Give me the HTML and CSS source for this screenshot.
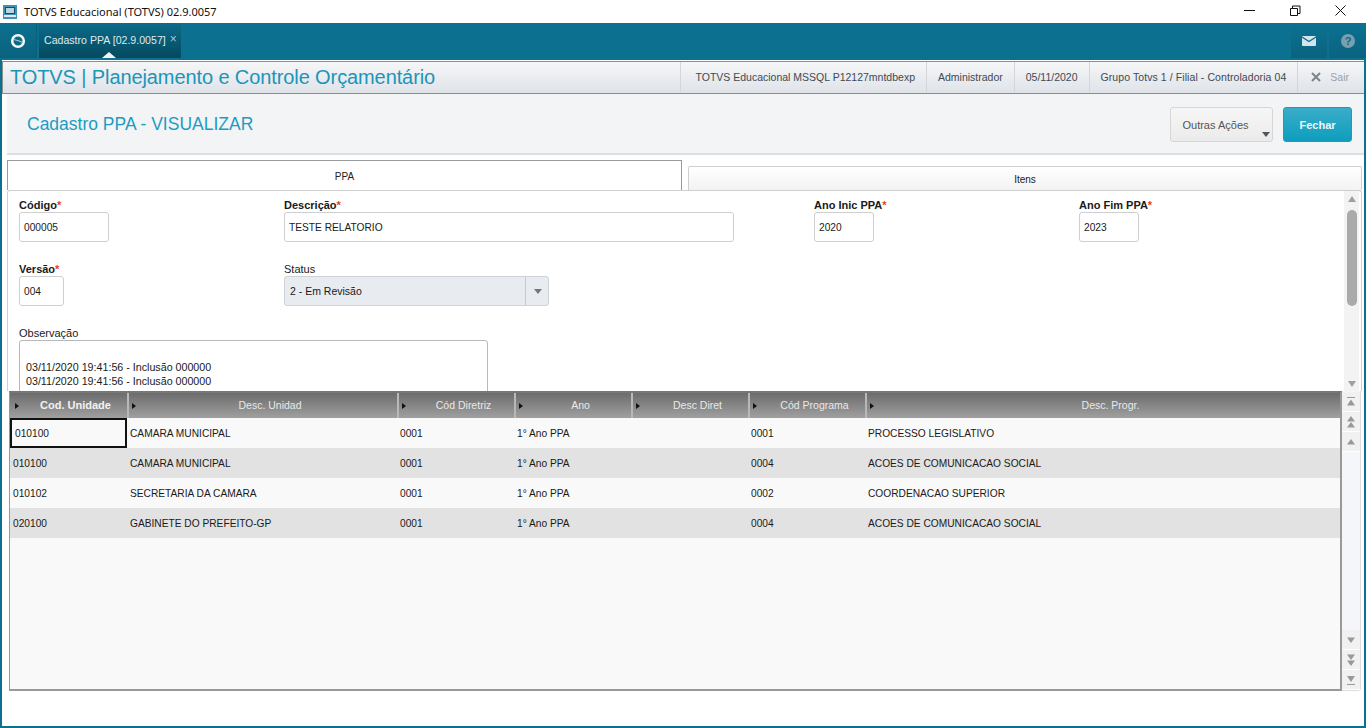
FILE: index.html
```html
<!DOCTYPE html>
<html lang="pt">
<head>
<meta charset="utf-8">
<title>TOTVS Educacional</title>
<link rel="stylesheet" href="styles.css">
</head>
<body>
<div class="window">
  <header class="titlebar">
    <svg class="app-icon" width="14" height="14" viewBox="0 0 14 14"><rect width="14" height="14" fill="#3f93b4"/><rect x="2" y="2" width="10" height="7" fill="#0f4f73"/><rect x="3" y="3" width="8" height="5" fill="#bcd3e0"/><rect x="1" y="10" width="12" height="2" fill="#dfe9ef"/></svg>
    <span class="title-text">TOTVS Educacional (TOTVS) 02.9.0057</span>
    <div class="win-controls">
      <svg width="46" height="23" viewBox="0 0 46 23"><path d="M17 10.500h11" stroke="#111" fill="none"/></svg>
      <svg width="46" height="23" viewBox="0 0 46 23"><path d="M17.500 8.500h7v7h-7zM19.500 8.500v-2.500h7.500v7.500h-2.500" stroke="#111" fill="none"/></svg>
      <svg width="46" height="23" viewBox="0 0 46 23"><path d="M16.500 5.500l10 10M26.500 5.500l-10 10" stroke="#111" fill="none"/></svg>
    </div>
  </header>
  <nav class="topbar">
    <div class="home-btn">
      <svg width="16" height="16" viewBox="0 0 16 16"><circle cx="8" cy="8" r="5.800" fill="none" stroke="#f2f7f9" stroke-width="2.600"/><path d="M3.500 6.500c3 1 6 1 9 3" stroke="#a9cbd6" stroke-width="1.100" fill="none"/></svg>
    </div>
    <div class="app-tab">
      <span>Cadastro PPA [02.9.0057]</span><span class="tab-x">×</span>
      <i class="tab-caret"></i>
    </div>
    <div class="top-actions">
      <div class="top-action">
        <svg width="14" height="10" viewBox="0 0 14 10"><rect width="14" height="10" rx="1" fill="#d3e5ec"/><path d="M0 1l7 4.500 7-4.500" stroke="#0c6a88" stroke-width="1.300" fill="none"/></svg>
      </div>
      <div class="top-action top-action-last">
        <svg width="14" height="14" viewBox="0 0 14 14"><circle cx="7" cy="7" r="7" fill="#7a9fae"/><text x="7" y="11.200" class="help-glyph" text-anchor="middle">?</text></svg>
      </div>
    </div>
  </nav>
  <main class="client">
    <section class="module-bar">
      <h1 class="module-title">TOTVS | Planejamento e Controle Orçamentário</h1>
      <ul class="status-list">
        <li class="status-first">TOTVS Educacional MSSQL P12127mntdbexp</li>
        <li>Administrador</li>
        <li>05/11/2020</li>
        <li class="status-wide">Grupo Totvs 1 / Filial - Controladoria 04</li>
        <li class="logout"><svg width="10" height="10" viewBox="0 0 10 10"><path d="M1 1l8 8M9 1l-8 8" stroke="#7c8589" stroke-width="2" fill="none"/></svg><span>Sair</span></li>
      </ul>
    </section>
    <section class="page-head">
      <h2 class="page-title">Cadastro PPA - VISUALIZAR</h2>
      <div class="page-actions">
        <button class="btn-more">Outras Ações<i class="more-caret"></i></button>
        <button class="btn-close">Fechar</button>
      </div>
    </section>
    <div class="tabs">
      <div class="tab tab-active">PPA</div>
      <div class="tab tab-idle">Itens</div>
    </div>
    <section class="form-panel">
      <div class="form-scroll">
        <div class="form-grid">
          <div class="field">
            <label class="lbl lbl-req">Código<em>*</em></label>
            <div class="input w90">000005</div>
          </div>
          <div class="field span2">
            <label class="lbl lbl-req">Descrição<em>*</em></label>
            <div class="input w450">TESTE RELATORIO</div>
          </div>
          <div class="field">
            <label class="lbl lbl-req">Ano Inic PPA<em>*</em></label>
            <div class="input w60">2020</div>
          </div>
          <div class="field">
            <label class="lbl lbl-req">Ano Fim PPA<em>*</em></label>
            <div class="input w60">2023</div>
          </div>
          <div class="field">
            <label class="lbl lbl-req">Versão<em>*</em></label>
            <div class="input w45">004</div>
          </div>
          <div class="field span2">
            <label class="lbl">Status</label>
            <div class="select"><span>2 - Em Revisão</span><i class="select-btn"></i></div>
          </div>
        </div>
        <div class="field">
          <label class="lbl">Observação</label>
          <div class="textarea">
            <p>03/11/2020 19:41:56 - Inclusão 000000</p>
            <p>03/11/2020 19:41:56 - Inclusão 000000</p>
            <p>03/11/2020 19:41:56 - Inclusão 000000</p>
          </div>
        </div>
      </div>
      <div class="vbar">
        <i class="arr arr-up"></i>
        <i class="thumb"></i>
        <i class="arr arr-down"></i>
      </div>
    </section>
    <section class="browse">
      <div class="table">
        <div class="row row-head">
          <div class="hcell c1">Cod. Unidade</div>
          <div class="hcell c2">Desc. Unidad</div>
          <div class="hcell c3">Cód Diretriz</div>
          <div class="hcell c3">Ano</div>
          <div class="hcell c3">Desc Diret</div>
          <div class="hcell c3">Cód Programa</div>
          <div class="hcell c4">Desc. Progr.</div>
        </div>
        <div class="row">
          <div class="cell c1 cell-focus">010100</div><div class="cell c2">CAMARA MUNICIPAL</div><div class="cell c3">0001</div><div class="cell c3">1° Ano PPA</div><div class="cell c3"></div><div class="cell c3">0001</div><div class="cell c4">PROCESSO LEGISLATIVO</div>
        </div>
        <div class="row row-alt">
          <div class="cell c1">010100</div><div class="cell c2">CAMARA MUNICIPAL</div><div class="cell c3">0001</div><div class="cell c3">1° Ano PPA</div><div class="cell c3"></div><div class="cell c3">0004</div><div class="cell c4">ACOES DE COMUNICACAO SOCIAL</div>
        </div>
        <div class="row">
          <div class="cell c1">010102</div><div class="cell c2">SECRETARIA DA CAMARA</div><div class="cell c3">0001</div><div class="cell c3">1° Ano PPA</div><div class="cell c3"></div><div class="cell c3">0002</div><div class="cell c4">COORDENACAO SUPERIOR</div>
        </div>
        <div class="row row-alt">
          <div class="cell c1">020100</div><div class="cell c2">GABINETE DO PREFEITO-GP</div><div class="cell c3">0001</div><div class="cell c3">1° Ano PPA</div><div class="cell c3"></div><div class="cell c3">0004</div><div class="cell c4">ACOES DE COMUNICACAO SOCIAL</div>
        </div>
      </div>
      <div class="nav-col">
        <div class="nav-group">
          <div class="nav-btn"><svg width="10" height="12" viewBox="0 0 10 12"><path d="M1 1.500h8" stroke="#999"/><path d="M5 3.500l4 6h-8z" fill="#999"/></svg></div>
          <div class="nav-btn"><svg width="10" height="12" viewBox="0 0 10 12"><path d="M5 0l4 5.500h-8zM5 6l4 5.500h-8z" fill="#999"/></svg></div>
          <div class="nav-btn"><svg width="10" height="12" viewBox="0 0 10 12"><path d="M5 3l4 5.500h-8z" fill="#999"/></svg></div>
        </div>
        <div class="nav-group">
          <div class="nav-btn"><svg width="10" height="12" viewBox="0 0 10 12"><path d="M5 9l4-5.500h-8z" fill="#999"/></svg></div>
          <div class="nav-btn"><svg width="10" height="12" viewBox="0 0 10 12"><path d="M5 6l4-5.500h-8zM5 12l4-5.500h-8z" fill="#999"/></svg></div>
          <div class="nav-btn"><svg width="10" height="12" viewBox="0 0 10 12"><path d="M5 8l4-6h-8z" fill="#999"/><path d="M1 10.500h8" stroke="#999"/></svg></div>
        </div>
      </div>
    </section>
  </main>
</div>
</body>
</html>
```
FILE: styles.css
```css
* { box-sizing: border-box; }
html, body { margin: 0; padding: 0; }
body { width: 1366px; height: 728px; overflow: hidden; font-family: "Liberation Sans", Arial, sans-serif; font-size: 11px; color: #1a1a1a; background: #fff; }
h1, h2, p, ul { margin: 0; padding: 0; }
i, em { font-style: normal; }

.window { width: 1366px; height: 728px; display: flex; flex-direction: column; background: #0c7190; }

.titlebar { height: 23px; flex: none; background: #fff; display: flex; align-items: center; padding-left: 3px; }
.app-icon { margin-right: 7px; }
.title-text { font-family: "Noto Sans", "Open Sans", sans-serif; font-size: 11px; color: #111; }
.win-controls { margin-left: auto; display: flex; margin-right: 1px; }
.win-controls svg { display: block; }

.topbar { height: 37px; flex: none; display: flex; background: #0c7190; }
.home-btn { width: 37px; height: 35px; display: flex; align-items: center; justify-content: center; border-right: 1px solid #0a5f79; background: linear-gradient(#0c7190, #0a627e); }
.app-tab { position: relative; margin-left: 2px; width: 142px; height: 35px; color: #dcebf0; font-size: 10.600px; display: flex; align-items: center; padding: 0 0 2px 5px; background: linear-gradient(#0c6c8a, #05495f); white-space: nowrap; }
.tab-x { margin-left: 4px; font-size: 12px; color: #a9c5d0; position: relative; top: -1px; }
.tab-caret { position: absolute; left: 63px; bottom: 0; width: 0; height: 0; border-left: 7px solid transparent; border-right: 7px solid transparent; border-bottom: 6px solid #f1f3f5; }
.top-actions { margin-left: auto; display: flex; gap: 2px; }
.top-action { width: 36px; height: 34px; margin-top: 1px; display: flex; align-items: center; justify-content: center; background: linear-gradient(#0c7190, #0a6380); }
.top-action-last { width: 37px; }
.help-glyph { font: bold 11px "Liberation Sans", sans-serif; fill: #0c6a88; }

.client { flex: none; height: 666px; margin: 0 2px; background: #fff; display: flex; flex-direction: column; }

.module-bar { height: 33px; flex: none; display: flex; align-items: center; margin-top: 1px; border-style: solid; border-color: #8b8d8f; border-width: 1px 0 1px 1px; background: linear-gradient(#f5f6f7, #dfe3e8); padding: 0 0 1px 7px; }
.module-title { font-size: 20px; font-weight: 400; color: #1b95ba; white-space: nowrap; letter-spacing: -0.1px; }
.status-list { margin-left: auto; display: flex; list-style: none; height: 30px; color: #3f4a52; font-size: 10.500px; }
.status-list li { display: flex; align-items: center; padding: 0 11px; border-left: 1px solid #d3d6da; white-space: nowrap; }
.status-list .status-first { padding-left: 15px; }
.status-list .status-wide { padding: 0 11px; letter-spacing: 0.08px; }
.status-list .logout { gap: 9px; padding: 0 15px 0 13px; color: #9aa1a5; }

.page-head { height: 61px; flex: none; margin-left: 5px; display: flex; align-items: center; justify-content: space-between; background: #f3f4f5; border-bottom: 2px solid #dfdfdf; padding: 1px 12px 0 20px; }
.page-title { font-size: 17.500px; font-weight: 400; color: #1b9cc4; }
.page-actions { display: flex; gap: 10px; }
.btn-more { position: relative; width: 103px; height: 35px; padding: 2px 12px 0 0; border: 1px solid #d6d6d6; border-radius: 3px; background: linear-gradient(#f6f6f6, #ebebeb); font: 11px "Liberation Sans", sans-serif; color: #555; }
.more-caret { position: absolute; right: 2px; bottom: 4px; width: 0; height: 0; border-left: 4px solid transparent; border-right: 4px solid transparent; border-top: 5px solid #555; }
.btn-close { width: 69px; height: 35px; padding: 2px 0 0; border: 1px solid #1b9cbd; border-radius: 3px; background: linear-gradient(#3badc9, #0e9dbe); font: bold 11px "Liberation Sans", sans-serif; color: #eef8fb; }

.tabs { height: 35px; flex: none; margin: 0 2px 0 5px; padding-top: 5px; display: flex; align-items: flex-end; justify-content: space-between; }
.tab { display: flex; align-items: center; justify-content: center; padding-top: 2px; font-size: 10px; color: #222; background: #fff; }
.tab-active { width: 675px; height: 30px; border: 1px solid #9a9a9a; border-bottom: 0; }
.tab-idle { width: 674px; height: 24px; border: 1px solid #cfcfcf; border-bottom: 0; border-radius: 2px 2px 0 0; background: linear-gradient(#fff, #f3f3f3); }

.form-panel { height: 201px; flex: none; margin: 0 2px 0 5px; display: flex; border: 1px solid #cfcfcf; border-bottom: 0; border-radius: 3px 3px 0 0; overflow: hidden; }
.form-scroll { flex: 1; padding: 7px 0 0 11px; overflow: hidden; }
.form-grid { display: grid; grid-template-columns: repeat(5, 265px); grid-auto-rows: 64px; }
.span2 { grid-column: span 2; }
.field { display: flex; flex-direction: column; align-items: flex-start; }
.lbl { height: 14px; line-height: 14px; font-size: 11px; color: #1a1a1a; }
.lbl-req { font-weight: 700; }
.lbl em { color: #e8401f; }
.input { height: 30px; border: 1px solid #cfcfcf; border-radius: 3px; background: #fff; display: flex; align-items: center; padding-left: 4px; font-size: 10.200px; color: #1a1a1a; }
.w90 { width: 90px; }
.w450 { width: 450px; }
.w60 { width: 60px; }
.w45 { width: 45px; }
.select { width: 265px; height: 30px; border: 1px solid #cfd2d6; border-radius: 3px; background: #e8ebf0; display: flex; align-items: center; justify-content: space-between; padding-left: 5px; font-size: 10.500px; }
.select-btn { position: relative; width: 23px; height: 28px; border-left: 1px solid #c6c9cd; }
.select-btn::after { content: ""; position: absolute; left: 8px; top: 12px; border-left: 4px solid transparent; border-right: 4px solid transparent; border-top: 5px solid #777; }
.textarea { width: 469px; height: 60px; border: 1px solid #b9b9b9; border-radius: 3px 3px 0 0; padding: 19px 6px 0; font-size: 10.700px; line-height: 14px; background: #fff; }

.vbar { width: 15px; flex: none; margin-right: 2px; background: #f3f3f3; display: flex; flex-direction: column; align-items: center; padding-top: 5px; }
.arr { flex: none; width: 0; height: 0; border-left: 4px solid transparent; border-right: 4px solid transparent; }
.arr-up { border-bottom: 6px solid #a0a0a0; }
.arr-down { border-top: 6px solid #a0a0a0; margin-top: auto; margin-bottom: 4px; }
.thumb { flex: none; width: 10px; height: 96px; margin-top: 8px; background: #aaa; border-radius: 5px; }

.browse { height: 300px; flex: none; margin: 0 3px 0 7px; display: flex; border-bottom: 1px solid #dcdcdc; border-right: 1px solid #dcdcdc; border-radius: 0 0 3px 0; }
.table { width: 1333px; height: 300px; flex: none; border-style: solid; border-color: #777 #999 #999 #999; border-width: 2px 2px 2px 1px; background: #f9f9f9; overflow: hidden; }
.row { display: flex; height: 30px; font-size: 10.200px; color: #1a1a1a; }
.row-alt { background: #e2e2e2; }
.row-head { height: 25px; background: linear-gradient(#6c6c6c, #a0a0a0); }
.c1 { width: 117px; }
.c2 { width: 270px; }
.c3 { width: 117px; }
.c4 { width: 475px; }
.hcell { position: relative; display: flex; align-items: center; justify-content: center; padding: 0 0 2px 14px; color: #e9e9e9; font-size: 10.500px; border-left: 2px solid #b8b8b8; white-space: nowrap; }
.hcell:first-child { border-left: 0; }
.hcell::before { content: ""; position: absolute; left: 3px; top: 10px; border-top: 3px solid transparent; border-bottom: 3px solid transparent; border-left: 4px solid #111; }
.hcell:first-child::before { left: 5px; }
.c1.hcell { font-weight: 700; font-size: 11px; color: #f2f2f2; }
.cell { display: flex; align-items: center; padding-left: 3px; white-space: nowrap; }
.cell-focus { border: 2px solid #111; padding-left: 3px; }

.nav-col { flex: 1; display: flex; flex-direction: column; justify-content: space-between; background: #f5f6f9; padding-top: 1px; border-radius: 0 0 3px 0; }
.nav-group { display: flex; flex-direction: column; }
.nav-btn { height: 20px; display: flex; align-items: center; justify-content: center; background: #f1f1f1; border-bottom: 1px solid #fff; }
```
